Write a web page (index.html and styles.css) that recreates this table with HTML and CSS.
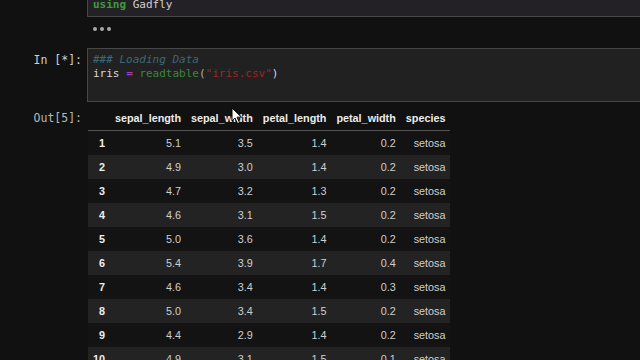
FILE: index.html
```html
<!DOCTYPE html>
<html lang="en">
<head>
  <meta charset="UTF-8" />
  <title>iris - Jupyter</title>
  <link rel="stylesheet" href="styles.css">
</head>
<body>
  <div class="notebook">
    <div class="cell cell-top">
      <div class="prompt"></div>
      <div class="input input-top"><div class="line"><span class="kw">using</span> Gadfly</div></div>
    </div>
    <div class="collapsed">
      <div class="prompt"></div>
      <div class="dots"><span></span><span></span><span></span></div>
    </div>

    <div class="cell">
      <div class="prompt in-prompt">In&nbsp;[*]:</div>
      <div class="input">
        <div class="line"><span class="cm">### Loading Data</span></div>
        <div class="line">iris <span class="op">=</span> <span class="fn">readtable</span><span class="pn">(</span><span class="st">"iris.csv"</span>)</div>
      </div>
    </div>

    <div class="cell output">
      <div class="prompt out-prompt">Out[5]:</div>
      <div class="output-area">
        <table class="frame">
          <thead>
            <tr><th></th><th>sepal_length</th><th>sepal_width</th><th>petal_length</th><th>petal_width</th><th>species</th></tr>
          </thead>
          <tbody>
            <tr><th>1</th><td>5.1</td><td>3.5</td><td>1.4</td><td>0.2</td><td>setosa</td></tr>
            <tr><th>2</th><td>4.9</td><td>3.0</td><td>1.4</td><td>0.2</td><td>setosa</td></tr>
            <tr><th>3</th><td>4.7</td><td>3.2</td><td>1.3</td><td>0.2</td><td>setosa</td></tr>
            <tr><th>4</th><td>4.6</td><td>3.1</td><td>1.5</td><td>0.2</td><td>setosa</td></tr>
            <tr><th>5</th><td>5.0</td><td>3.6</td><td>1.4</td><td>0.2</td><td>setosa</td></tr>
            <tr><th>6</th><td>5.4</td><td>3.9</td><td>1.7</td><td>0.4</td><td>setosa</td></tr>
            <tr><th>7</th><td>4.6</td><td>3.4</td><td>1.4</td><td>0.3</td><td>setosa</td></tr>
            <tr><th>8</th><td>5.0</td><td>3.4</td><td>1.5</td><td>0.2</td><td>setosa</td></tr>
            <tr><th>9</th><td>4.4</td><td>2.9</td><td>1.4</td><td>0.2</td><td>setosa</td></tr>
            <tr><th>10</th><td>4.9</td><td>3.1</td><td>1.5</td><td>0.1</td><td>setosa</td></tr>
          </tbody>
        </table>
      </div>
    </div>
  </div>

  <!-- mouse pointer caught in the capture -->
  <svg class="cursor" width="12" height="18" viewBox="0 0 12 18">
    <path d="M1 1 L1 14 L4 11 L6.5 16.5 L8.5 15.6 L6 10.2 L10.5 10.2 Z" fill="#fff" stroke="#000" stroke-width="1"/>
  </svg>
</body>
</html>
```

FILE: styles.css
```css
body {
  margin: 0;
  background: #111111;
  overflow: hidden;
  font-family: "DejaVu Sans Mono", "Liberation Mono", monospace;
  font-size: 11px;
  color: #d8d8d8;
}

.notebook {
  width: 640px;
}

.cell,
.collapsed {
  display: flex;
}

.prompt {
  width: 87px;
  flex-shrink: 0;
  box-sizing: border-box;
  padding-right: 5px;
  text-align: right;
  line-height: 14px;
  color: #cfcfcf;
  font-size: 11.5px;
}

.input {
  flex: 1;
  background: #212121;
  border: 1px solid #474747;
  border-right: none;
  padding: 4px 5px 20px;
}

.line {
  height: 14px;
  line-height: 14px;
  white-space: pre;
}

.cell-top {
  margin-top: -7px;
}

.input-top {
  background: #232126;
  padding-bottom: 4px;
  color: #cfcfcf;
}

.collapsed {
  height: 31px;
}

.dots {
  display: flex;
  gap: 3px;
  padding: 10px 0 0 6px;
}

.dots span {
  width: 4px;
  height: 4px;
  border-radius: 50%;
  background: #a8a8a8;
}

.in-prompt {
  padding-top: 5px;
}

.out-prompt {
  padding-top: 9px;
  color: #b8b8b8;
}

.kw {
  color: #3f9a3f;
  font-weight: bold;
}

.cm {
  color: #3b6878;
  font-style: italic;
}

.op {
  color: #a23bc2;
  font-weight: bold;
}

.fn {
  color: #3a883a;
}

.pn {
  color: #b0b0b0;
}

.st {
  color: #a32323;
}

.output-area {
  padding: 3px 0 0 1px;
}

.frame {
  border-collapse: collapse;
  font-family: "Liberation Sans", Arial, sans-serif;
  font-size: 10.8px;
  color: #cfcfcf;
}

.frame th,
.frame td {
  padding: 0 5px;
  text-align: right;
  white-space: nowrap;
}

.frame thead th {
  height: 25px;
  color: #ececec;
  border-bottom: 1px solid #555555;
}

.frame tbody tr {
  height: 24px;
  background: #131313;
}

.frame tbody tr:nth-child(even) {
  background: #232323;
}

.frame tbody th {
  color: #eeeeee;
}

.cursor {
  position: absolute;
  left: 231px;
  top: 107px;
}
```
